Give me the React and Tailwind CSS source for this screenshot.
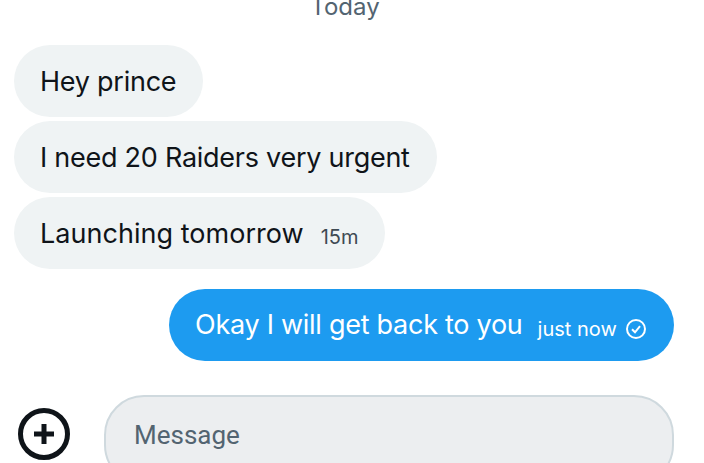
import React from "react";

const Received = ({ text, time, className }) => (
  <div className="flex items-center h-[72px] w-fit rounded-[36px] bg-[#eff3f4] pl-[26px] pr-[27px] text-[#0f1419]">
    <span className={`pt-[2px] text-[27px] ${className}`}>{text}</span>
    {time && <span className="ml-[17px] mr-[-1px] mt-[8px] text-[20px] tracking-[0.1px] text-[#3e4a53]">{time}</span>}
  </div>
);

const App = () => {
  return (
    <div
      className="h-[463px] w-[704px] overflow-hidden bg-white"
      style={{ fontFamily: "Inter, 'Noto Sans', sans-serif" }}
    >
      <div className="mt-[-10px] h-[55px] pr-[14px] text-center text-[24px] leading-[34px] text-[#536471]">
        Today
      </div>

      <div className="flex flex-col gap-[4px] pl-[14px]">
        <Received text="Hey prince" className="tracking-[-0.25px]" />
        <Received text="I need 20 Raiders very urgent" className="tracking-[-0.26px]" />
        <Received text="Launching tomorrow" time="15m" className="tracking-[0.03px]" />
      </div>

      <div className="mt-[20px] flex justify-end pr-[30px]">
        <div className="flex h-[72px] w-[505px] items-center rounded-[36px] bg-[#1d9bf0] pl-[26px] text-white">
          <span className="pt-[1px] text-[27px] tracking-[-0.27px]">Okay I will get back to you</span>
          <span className="ml-[15px] mt-[8px] text-[20px]">just now</span>
          <svg className="ml-[8px] mt-[8px]" width="22" height="22" viewBox="0 0 22 22" fill="none" stroke="white" strokeWidth="2">
            <circle cx="11" cy="11" r="9" />
            <path d="M7 11.3l3 3 5-6.2" />
          </svg>
        </div>
      </div>

      <div className="mt-[34px] flex items-start pl-[18px]">
        <svg className="mt-[13px] shrink-0" width="52" height="52" viewBox="0 0 52 52" fill="none" stroke="#0f1419">
          <circle cx="26" cy="26" r="23.5" strokeWidth="5" />
          <path d="M26 16v20M16 26h20" strokeWidth="5" />
        </svg>
        <div className="ml-[34px] flex h-[90px] w-[570px] items-start rounded-[40px] border-2 border-[#cfd9de] bg-[#eceef0] pl-[28px] pt-[21px]">
          <span className="text-[26px] leading-[34px] text-[#536471]" style={{ fontFamily: "Roboto, sans-serif" }}>Message</span>
        </div>
      </div>
    </div>
  );
};

export default App;
